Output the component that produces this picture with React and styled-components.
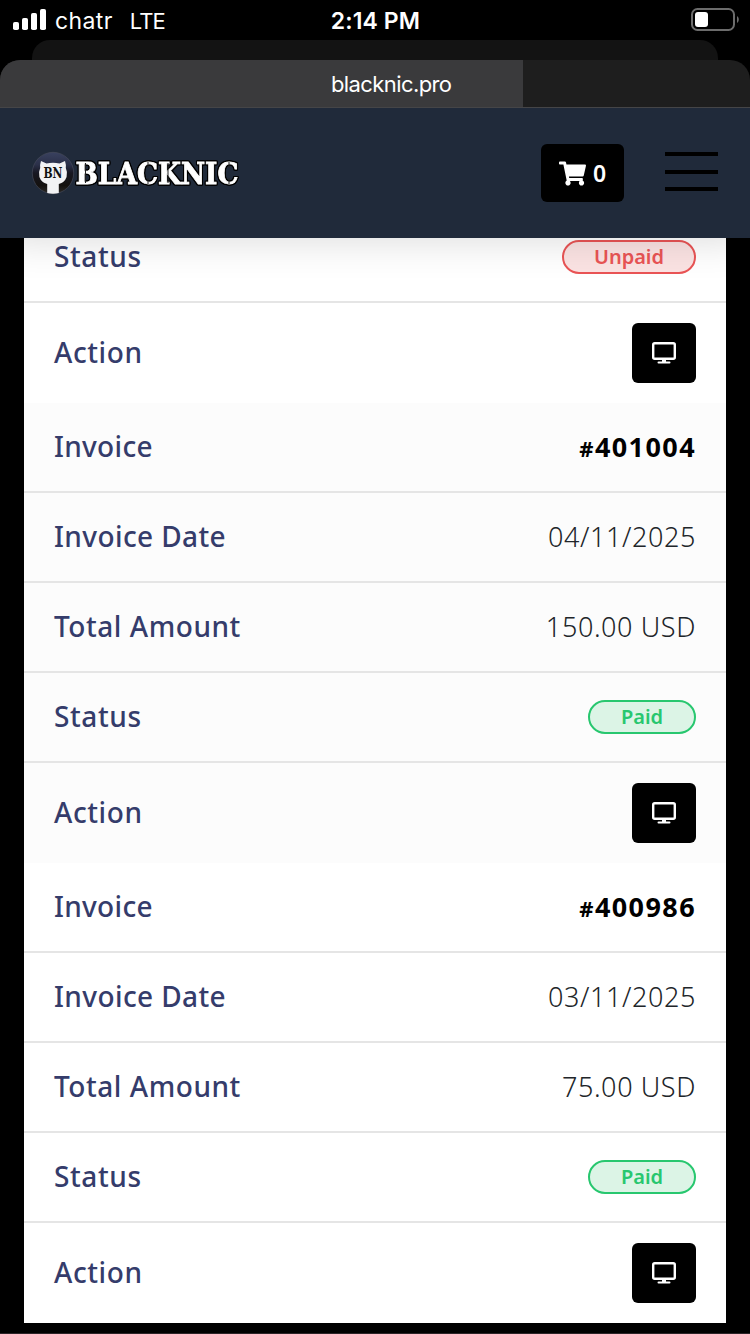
import styled, { createGlobalStyle } from "styled-components";
import { FaShoppingCart } from "react-icons/fa";

const invoices = [
  { id: "401004", date: "04/11/2025", amount: "150.00 USD", status: "Paid" },
  { id: "400986", date: "03/11/2025", amount: "75.00 USD", status: "Paid" },
];

export default function App() {
  return (
    <Phone>
      <GlobalStyle />
      <StatusBar>
        <Carrier>
          <SignalIcon />
          <CarrierName>chatr</CarrierName>
          <Network>LTE</Network>
        </Carrier>
        <Clock>2:14 PM</Clock>
        <BatterySlot>
          <BatteryIcon />
        </BatterySlot>
      </StatusBar>
      <BackTab />
      <AddressBar>
        <Progress />
        <Address>blacknic.pro</Address>
      </AddressBar>
      <Header>
        <Logo />
        <Actions>
          <CartButton>
            <FaShoppingCart size={27} />
            <CartCount>0</CartCount>
          </CartButton>
          <MenuButton>
            <MenuLine />
            <MenuLine />
            <MenuLine />
          </MenuButton>
        </Actions>
      </Header>
      <Content>
        <Group $first>
          <StatusRow status="Unpaid" />
          <ActionRow />
        </Group>
        {invoices.map((invoice, i) => (
          <Group key={invoice.id} $striped={i % 2 === 0}>
            <Row>
              <Label $spacing="0.3px">Invoice</Label>
              <InvoiceId>
                <Hash>#</Hash>
                {invoice.id}
              </InvoiceId>
            </Row>
            <Row>
              <Label>Invoice Date</Label>
              <Value>{invoice.date}</Value>
            </Row>
            <Row>
              <Label $spacing="0.55px">Total Amount</Label>
              <Value>{invoice.amount}</Value>
            </Row>
            <StatusRow status={invoice.status} />
            <ActionRow />
          </Group>
        ))}
      </Content>
      <BottomEdge />
    </Phone>
  );
}

function StatusRow({ status }) {
  return (
    <Row>
      <Label $spacing="0.6px">Status</Label>
      <Badge $paid={status === "Paid"}>{status}</Badge>
    </Row>
  );
}

function ActionRow() {
  return (
    <Row $last>
      <Label $spacing="0.6px">Action</Label>
      <ViewButton>
        <MonitorIcon />
      </ViewButton>
    </Row>
  );
}

function SignalIcon() {
  return (
    <svg width="34" height="22" viewBox="0 0 34 22" fill="#fff">
      <rect x="0" y="13" width="6" height="8" rx="1.8" />
      <rect x="9" y="9" width="6" height="12" rx="1.8" />
      <rect x="18" y="4" width="6" height="17" rx="1.8" />
      <rect x="27" y="0" width="6" height="21" rx="1.8" />
    </svg>
  );
}

function BatteryIcon() {
  return (
    <svg width="49" height="24" viewBox="0 0 49 24">
      <rect x="1" y="1" width="42" height="21" rx="5.500" fill="none" stroke="#6c6c6c" strokeWidth="2" />
      <rect x="4" y="4" width="13" height="15" rx="3" fill="#fff" />
      <path d="M46 8v7c2.400-1.400 2.400-5.600 0-7z" fill="#6c6c6c" />
    </svg>
  );
}

function MonitorIcon() {
  return (
    <svg width="24" height="22" viewBox="0 0 24 22" fill="none" stroke="#fff">
      <rect x="1.200" y="1.200" width="21.600" height="15.600" rx="1.500" strokeWidth="2.400" />
      <path d="M12 17v3" strokeWidth="4" />
      <path d="M6.500 20.500h11" strokeWidth="2" strokeLinecap="round" />
    </svg>
  );
}

function Logo() {
  return (
    <LogoSvg width="212" height="46" viewBox="0 0 212 46">
      <defs>
        <linearGradient id="ball" x1="0" y1="0" x2="0" y2="1">
          <stop offset="0" stopColor="#39415f" />
          <stop offset="0.3" stopColor="#2b3049" />
          <stop offset="0.5" stopColor="#171722" />
          <stop offset="0.8" stopColor="#14110f" />
          <stop offset="1" stopColor="#2c2a28" />
        </linearGradient>
      </defs>
      <circle cx="22" cy="23" r="20.700" fill="url(#ball)" stroke="#4a4d5c" strokeWidth="0.600" />
      <path
        d="M10 11l5.500 2.500q6.500-1.500 13 0l5.500-2.500q1.300 4 .8 7q2 4 .8 9q-2 5.500-7.800 7v9q-5.800 1.500-11.600 0v-9q-5.800-1.500-7.800-7q-1.200-5 .8-9q-.5-3 .8-7z"
        fill="#f2f2f4"
      />
      <LogoMark x="12.500" y="27.500" textLength="19" lengthAdjust="spacingAndGlyphs">
        BN
      </LogoMark>
      <LogoText x="44.500" y="33.500" textLength="163" lengthAdjust="spacingAndGlyphs">
        BLACKNIC
      </LogoText>
      <path d="M54.500 13v20M117 12v6M117 28v6M137 13v20M198 12v6M198 28v6" stroke="#222" strokeWidth="1" />
    </LogoSvg>
  );
}

const GlobalStyle = createGlobalStyle`
  * {
    box-sizing: border-box;
  }

  body {
    margin: 0;
    background: #000;
  }
`;

const Phone = styled.div`
  display: flex;
  flex-direction: column;
  width: 750px;
  height: 1334px;
  overflow: hidden;
  background: #000;
  font-family: "Noto Sans", sans-serif;
`;

const StatusBar = styled.div`
  display: grid;
  grid-template-columns: 1fr auto 1fr;
  align-items: center;
  flex: none;
  height: 40px;
  padding: 0 10px 0 13px;
  color: #fff;
  font-family: Inter, sans-serif;
  font-size: 23px;
`;

const Carrier = styled.div`
  display: flex;
  align-items: center;
`;

const CarrierName = styled.span`
  padding-top: 2px;
  margin-left: 8px;
  letter-spacing: 0.4px;
`;

const Network = styled.span`
  padding-top: 2px;
  margin-left: 17px;
  font-size: 22px;
  letter-spacing: -0.9px;
`;

const Clock = styled.div`
  padding: 2px 2px 0 0;
  font-weight: 600;
  letter-spacing: 0.1px;
`;

const BatterySlot = styled.div`
  display: flex;
  justify-content: flex-end;
`;

const BackTab = styled.div`
  flex: none;
  height: 20px;
  margin: 0 32px;
  border-radius: 18px 18px 0 0;
  background: #131313;
`;

const AddressBar = styled.div`
  display: grid;
  flex: none;
  z-index: 2;
  height: 48px;
  overflow: hidden;
  border-bottom: 1px solid #454547;
  border-radius: 20px 20px 0 0;
  background: #1e1e1e;
`;

const Progress = styled.div`
  grid-area: 1 / 1;
  width: 523px;
  height: 48px;
  background: #3a3a3c;
`;

const Address = styled.div`
  grid-area: 1 / 1;
  padding-left: 331px;
  color: #fff;
  font-family: Inter, sans-serif;
  font-size: 22px;
  line-height: 48px;
  letter-spacing: -0.6px;
`;

const Header = styled.header`
  display: flex;
  align-items: center;
  justify-content: space-between;
  flex: none;
  z-index: 1;
  height: 130px;
  padding: 0 32px 0 31px;
  background: #202a3a;
  box-shadow: 0 0 40px rgba(0, 0, 0, 0.16);
`;

const LogoSvg = styled.svg`
  display: block;
  overflow: visible;
`;

const LogoText = styled.text`
  fill: #fff;
  stroke: #fff;
  stroke-width: 0.8px;
  font: bold 29px "DejaVu Serif", serif;
  filter: drop-shadow(1px 0 0 #000) drop-shadow(-1px 0 0 #000)
    drop-shadow(0 1px 0 #000) drop-shadow(0 -1px 0 #000);
`;

const LogoMark = styled.text`
  fill: #111;
  font: bold 14px "DejaVu Serif", serif;
`;

const Actions = styled.div`
  display: flex;
  align-items: center;
  gap: 41px;
`;

const CartButton = styled.div`
  display: flex;
  align-items: center;
  justify-content: center;
  gap: 7px;
  width: 83px;
  height: 58px;
  border-radius: 6px;
  background: #000;
  color: #fff;
`;

const CartCount = styled.span`
  font-size: 23px;
  font-weight: 600;
  line-height: 1;
`;

const MenuButton = styled.div`
  display: flex;
  flex-direction: column;
  gap: 13.5px;
  width: 53px;
  margin-bottom: 3px;
`;

const MenuLine = styled.span`
  height: 4px;
  background: #000;
`;

const Content = styled.main`
  flex: none;
  padding: 0 24px;
`;

const Group = styled.section`
  margin-top: ${({ $first }) => ($first ? "-25px" : "0")};
  background: ${({ $striped }) => ($striped ? "#fcfcfc" : "#fff")};
`;

const Row = styled.div`
  display: flex;
  align-items: center;
  justify-content: space-between;
  height: ${({ $last }) => ($last ? "100px" : "90px")};
  padding: 0 30px;
  border-bottom: ${({ $last }) => ($last ? "none" : "2px solid #e5e5e5")};
`;

const Label = styled.span`
  padding-bottom: 2px;
  color: #353c6b;
  font-size: 28px;
  font-weight: 500;
  letter-spacing: ${({ $spacing = "0.4px" }) => $spacing};
`;

const Value = styled.span`
  padding-bottom: 1px;
  color: #212529;
  font-size: 27px;
  font-weight: 350;
  letter-spacing: 0.6px;
`;

const InvoiceId = styled.span`
  padding-bottom: 2px;
  color: #000;
  font-size: 27px;
  font-weight: 700;
  letter-spacing: 1.4px;
`;

const Hash = styled.span`
  font-size: 22px;
`;

const Badge = styled.span`
  width: ${({ $paid }) => ($paid ? "108px" : "134px")};
  height: 34px;
  border: 2px solid ${({ $paid }) => ($paid ? "#28c76f" : "#ea5455")};
  border-radius: 17px;
  background: ${({ $paid }) => ($paid ? "#dcf4e6" : "#fbe3e3")};
  color: ${({ $paid }) => ($paid ? "#28c76f" : "#ea5455")};
  font-size: 20px;
  font-weight: 600;
  line-height: 30px;
  text-align: center;
`;

const ViewButton = styled.div`
  display: flex;
  align-items: center;
  justify-content: center;
  width: 64px;
  height: 60px;
  border-radius: 6px;
  background: #000;
`;

const BottomEdge = styled.div`
  flex: none;
  height: 1px;
  margin-top: 10px;
  background: #2b2428;
`;
